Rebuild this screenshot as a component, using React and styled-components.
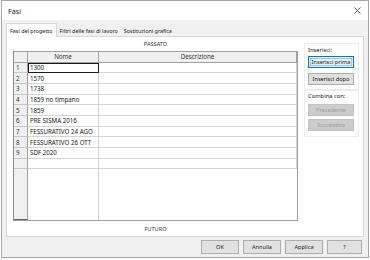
import React from "react";
import styled, { createGlobalStyle } from "styled-components";

const Global = createGlobalStyle`
  html, body { margin: 0; padding: 0; background: #ffffff; }
  body { font-family: "Noto Sans", "Open Sans", sans-serif; }
  * { box-sizing: border-box; }
`;

const Window = styled.div`
  width: 368px;
  height: 258px;
  margin: 0 0 0 1px;
  border: 1px solid #a6a6a6;
  background: #f0f0f0;
  display: flex;
  flex-direction: column;
  font-size: 6.2px;
  color: #1a1a1a;
`;

const TitleBar = styled.div`
  height: 19px;
  background: #ffffff;
  display: flex;
  align-items: center;
  justify-content: space-between;
  padding: 0 7px 0 6px;
  font-size: 7.2px;
`;

const Body = styled.div`
  display: flex;
  flex-direction: column;
  padding: 2px 4px 0 4px;
`;

const TabStrip = styled.div`
  display: flex;
  align-items: flex-end;
  height: 14px;
`;

const Tab = styled.div`
  height: ${(p) => (p.$active ? "14px" : "12px")};
  padding: 0 ${(p) => (p.$active ? "3px" : "2px")};
  display: flex;
  align-items: center;
  font-size: 5.4px;
  background: ${(p) => (p.$active ? "#ffffff" : "#f0f0f0")};
  border: 1px solid ${(p) => (p.$active ? "#d9d9d9" : "transparent")};
  border-bottom: none;
  margin-bottom: ${(p) => (p.$active ? "-1px" : "0")};
  position: relative;
  white-space: nowrap;
`;

const Panel = styled.div`
  height: 201px;
  background: #ffffff;
  border: 1px solid #d9d9d9;
  display: flex;
  padding: 0 4px 0 6px;
  gap: 6px;
`;

const GridArea = styled.div`
  width: 285px;
  display: flex;
  flex-direction: column;
  align-items: stretch;
`;

const Caption = styled.div`
  height: ${(p) => p.$h}px;
  display: flex;
  align-items: center;
  justify-content: center;
  font-size: 5.6px;
  color: #333;
`;

const Grid = styled.div`
  height: 170px;
  border: 1px solid #a0a0a0;
  border-left-color: #8a8a8a;
  display: flex;
  flex-direction: column;
  background: #ffffff;
  position: relative;
  overflow: hidden;
`;

const RowHeaderFill = styled.div`
  position: absolute;
  left: 0;
  top: 0;
  bottom: 0;
  width: 14px;
  background: #f0f0f0;
  border-right: 1px solid #a0a0a0;
  border-bottom: 1px solid #606060;
`;

const ColumnLine = styled.div`
  position: absolute;
  left: 84px;
  top: 0;
  bottom: 0;
  width: 1px;
  background: #d4d4d4;
`;

const Row = styled.div`
  display: grid;
  grid-template-columns: 14px 71px 1fr;
  height: ${(p) => (p.$header ? "10.5px" : "10.7px")};
  position: relative;
  z-index: 1;
`;

const HeadCell = styled.div`
  background: #f0f0f0;
  border-right: 1px solid #a0a0a0;
  border-bottom: 1px solid #a0a0a0;
  display: flex;
  align-items: center;
  justify-content: center;
  color: #333;
`;

const NumCell = styled.div`
  background: #f0f0f0;
  border-right: 1px solid #a0a0a0;
  border-bottom: 1px solid #c8c8c8;
  display: flex;
  align-items: center;
  padding-left: 2px;
  color: #333;
`;

const Cell = styled.div`
  border-right: 1px solid #d4d4d4;
  border-bottom: 1px solid #d4d4d4;
  display: flex;
  align-items: center;
  padding-left: 2px;
  white-space: nowrap;
  overflow: hidden;
  ${(p) => p.$selected && "outline: 1px solid #1a1a1a; outline-offset: -1px;"}
`;

const Side = styled.div`
  flex: 1;
  display: flex;
  flex-direction: column;
  padding-top: 6px;
`;

const Group = styled.div`
  border: 1px solid #ececec;
  padding: ${(p) => p.$pad};
  display: flex;
  flex-direction: column;
  gap: ${(p) => p.$gap}px;
`;

const GroupLabel = styled.div`
  font-size: 5.8px;
  height: 8px;
  line-height: 8px;
  margin-bottom: ${(p) => p.$mb}px;
`;

const Button = styled.button`
  font-family: inherit;
  font-size: 5.6px;
  height: ${(p) => p.$h || 12}px;
  width: ${(p) => p.$w || 46}px;
  padding: 0;
  margin: 0;
  border: 1px solid ${(p) => (p.$focus ? "#0078d7" : p.$disabled ? "#c4c4c4" : "#adadad")};
  background: ${(p) => (p.$focus ? "#e5f1fb" : p.$disabled ? "#cccccc" : "#e1e1e1")};
  color: ${(p) => (p.$disabled ? "#9c9c9c" : "#1a1a1a")};
  ${(p) => p.$focus && "box-shadow: inset 0 0 0 1px #e5f1fb, inset 0 0 0 1.5px #5a9fd6;"}
  display: flex;
  align-items: center;
  justify-content: center;
  flex-shrink: 0;
`;

const Footer = styled.div`
  flex: 1;
  display: flex;
  justify-content: flex-end;
  align-items: center;
  gap: 4px;
  padding: 0 6px 0 0;
`;

const rows = [
  "1300",
  "1570",
  "1738",
  "1859 no timpano",
  "1859",
  "PRE SISMA 2016",
  "FESSURATIVO 24 AGO",
  "FESSURATIVO 26 OTT",
  "SDF 2020",
];

export default function App() {
  return (
    <>
      <Global />
      <Window>
        <TitleBar>
          <span>Fasi</span>
          <svg width="7" height="7" viewBox="0 0 7 7">
            <path d="M0.5 0.5 L6.5 6.5 M6.5 0.5 L0.5 6.5" stroke="#333" strokeWidth="0.8" />
          </svg>
        </TitleBar>
        <Body>
          <TabStrip>
            <Tab $active>Fasi del progetto</Tab>
            <Tab>Filtri delle fasi di lavoro</Tab>
            <Tab>Sostituzioni grafica</Tab>
          </TabStrip>
          <Panel>
            <GridArea>
              <Caption $h={14}>PASSATO</Caption>
              <Grid>
                <RowHeaderFill />
                <ColumnLine />
                <Row $header>
                  <HeadCell />
                  <HeadCell>Nome</HeadCell>
                  <HeadCell>Descrizione</HeadCell>
                </Row>
                {rows.map((r, i) => (
                  <Row key={i}>
                    <NumCell>{i + 1}</NumCell>
                    <Cell $selected={i === 0}>{r}</Cell>
                    <Cell />
                  </Row>
                ))}
                <Row>
                  <NumCell />
                  <Cell />
                  <Cell />
                </Row>
              </Grid>
              <Caption $h={15}>FUTURO</Caption>
            </GridArea>
            <Side>
              <Group $pad="2px 4px 4px 3px" $gap={5}>
                <GroupLabel $mb={-3}>Inserisci:</GroupLabel>
                <Button $focus>Inserisci prima</Button>
                <Button>Inserisci dopo</Button>
              </Group>
              <Group $pad="1px 4px 5px 3px" $gap={3}>
                <GroupLabel $mb={1}>Combina con:</GroupLabel>
                <Button $disabled disabled>Precedente</Button>
                <Button $disabled disabled>Successivo</Button>
              </Group>
            </Side>
          </Panel>
        </Body>
        <Footer>
          <Button $w={38} $h={14}>OK</Button>
          <Button $w={38} $h={14}>Annulla</Button>
          <Button $w={38} $h={14}>Applica</Button>
          <Button $w={35} $h={14}>?</Button>
        </Footer>
      </Window>
    </>
  );
}
